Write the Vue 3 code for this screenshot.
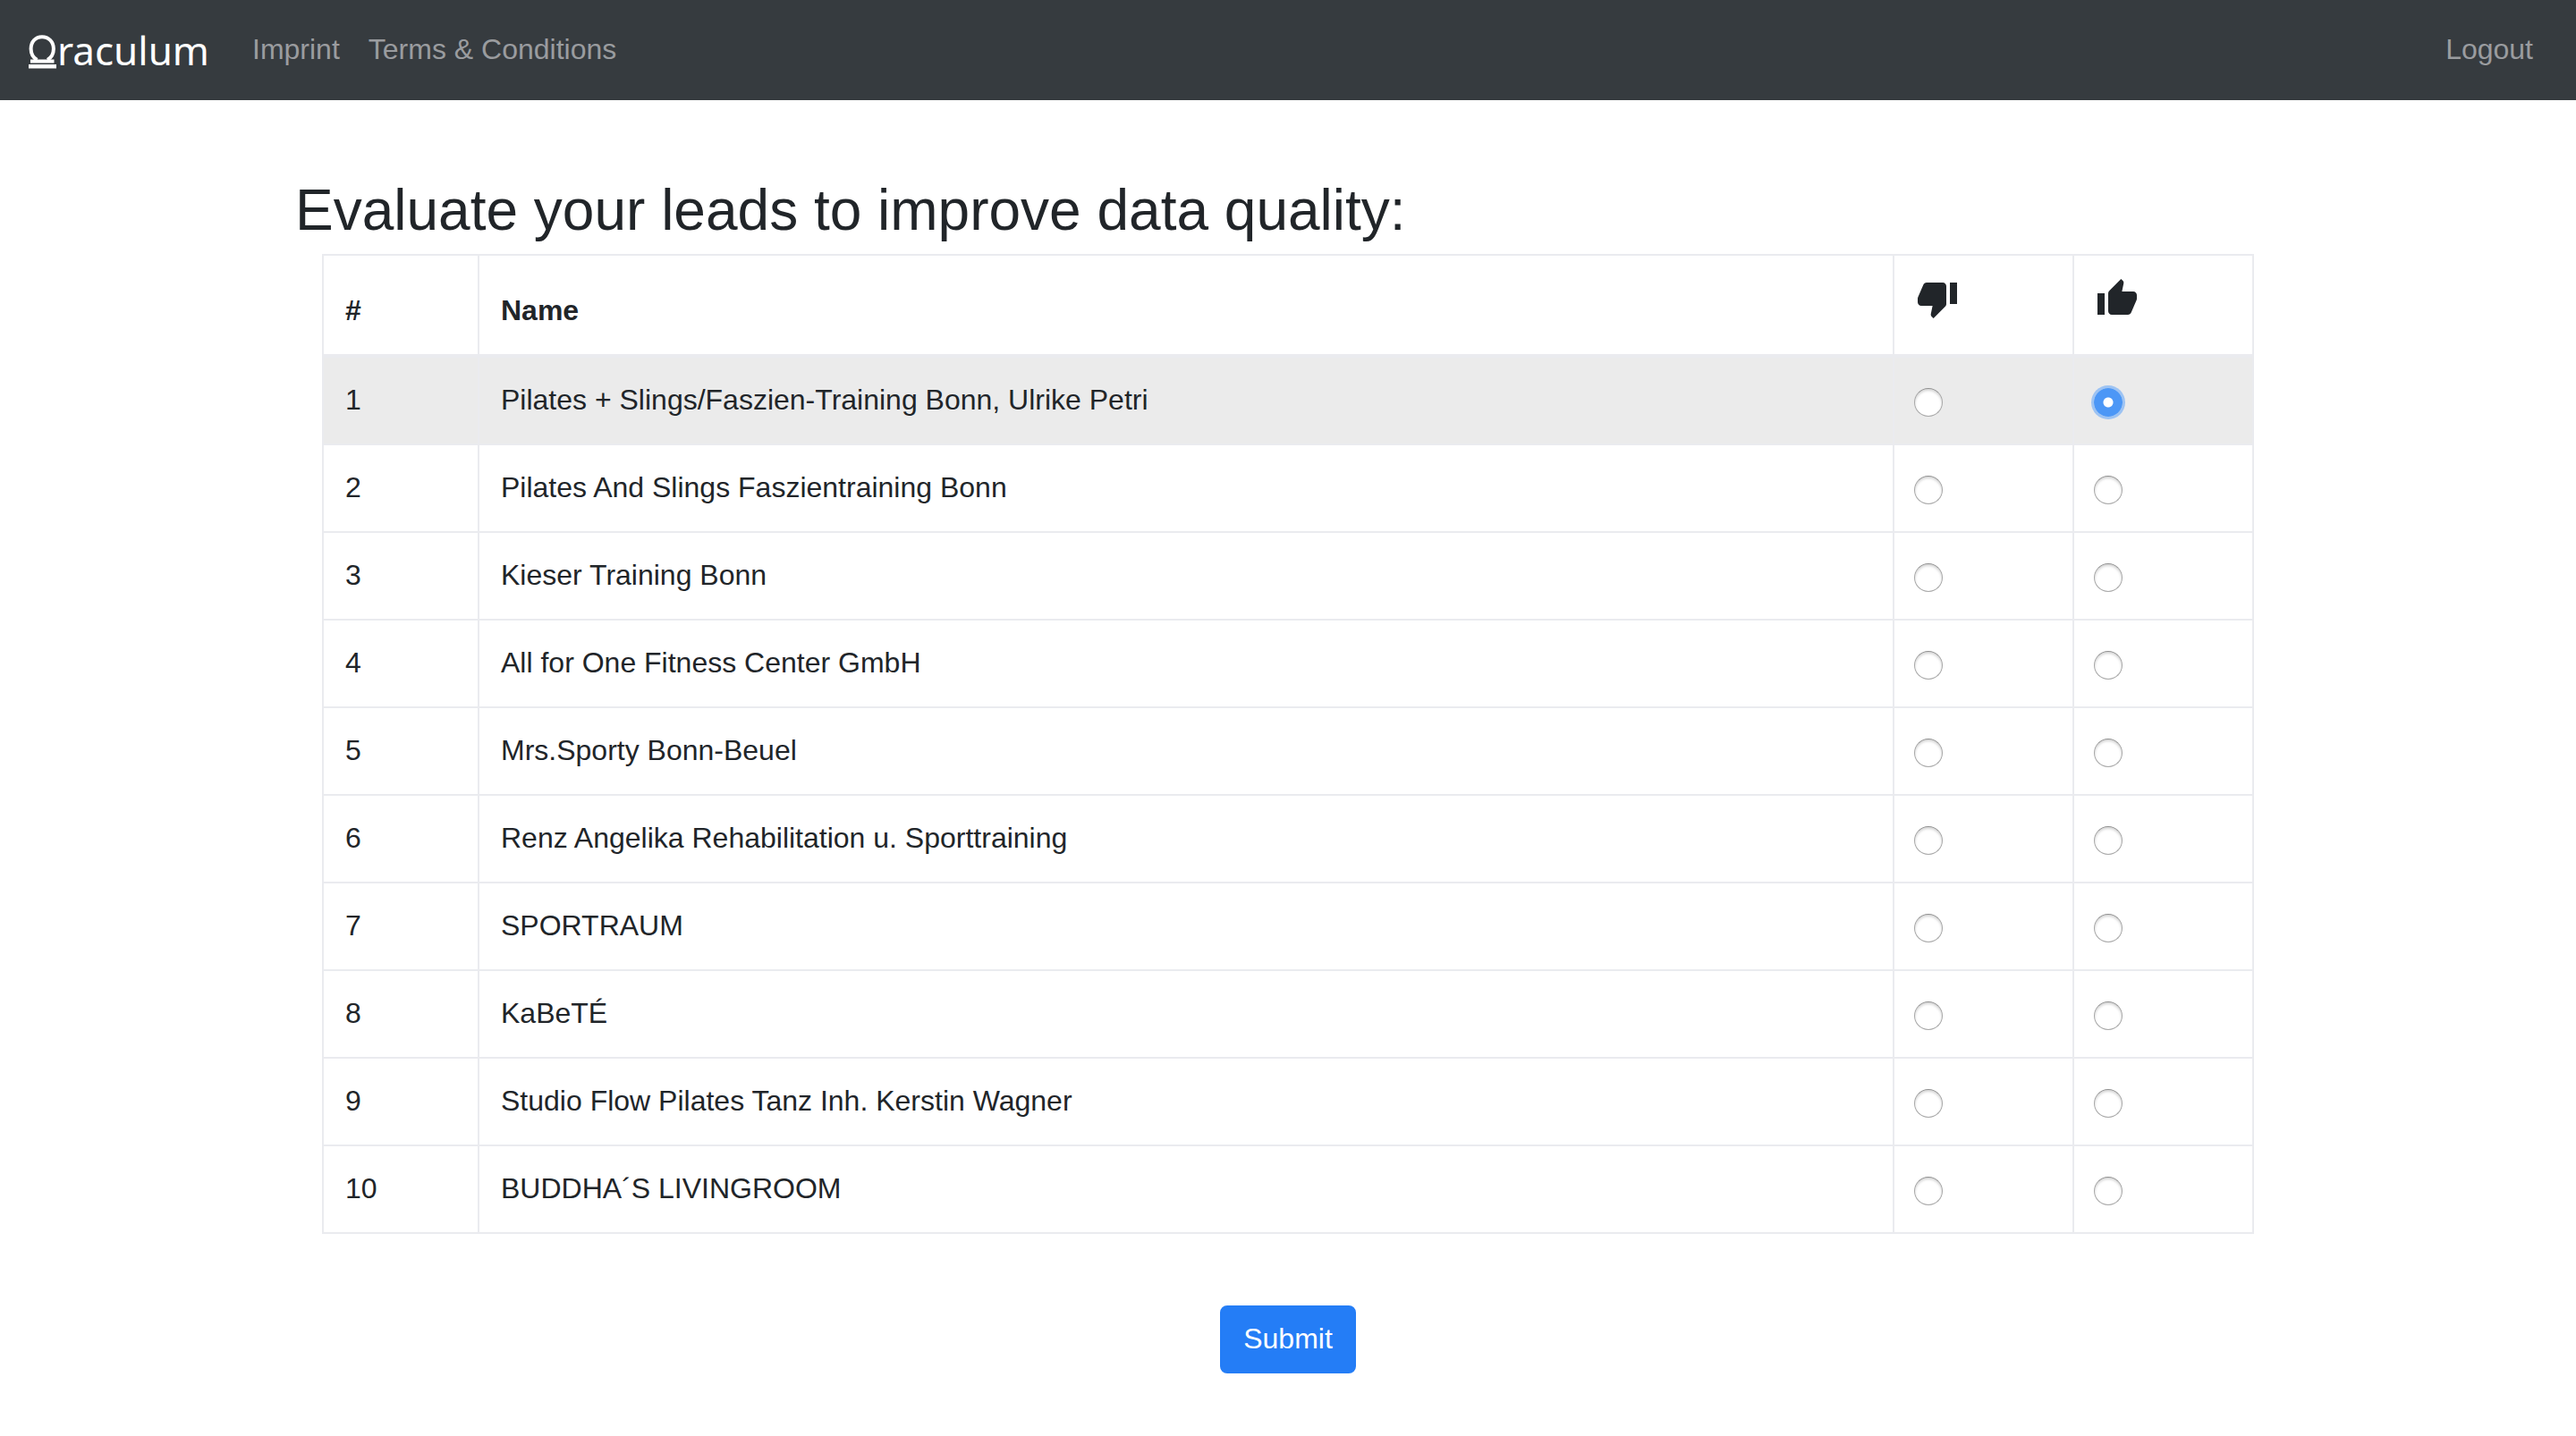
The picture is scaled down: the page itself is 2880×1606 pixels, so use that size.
<script setup>
import { ref } from 'vue'

const leads = ref([
  { id: 1, name: 'Pilates + Slings/Faszien-Training Bonn, Ulrike Petri', vote: 'up' },
  { id: 2, name: 'Pilates And Slings Faszientraining Bonn', vote: '' },
  { id: 3, name: 'Kieser Training Bonn', vote: '' },
  { id: 4, name: 'All for One Fitness Center GmbH', vote: '' },
  { id: 5, name: 'Mrs.Sporty Bonn-Beuel', vote: '' },
  { id: 6, name: 'Renz Angelika Rehabilitation u. Sporttraining', vote: '' },
  { id: 7, name: 'SPORTRAUM', vote: '' },
  { id: 8, name: 'KaBeTÉ', vote: '' },
  { id: 9, name: 'Studio Flow Pilates Tanz Inh. Kerstin Wagner', vote: '' },
  { id: 10, name: 'BUDDHA´S LIVINGROOM', vote: '' },
])
</script>

<template>
  <nav class="navbar">
    <a class="brand" href="#" aria-label="Oraculum">
      <svg class="brand-mark" viewBox="0 0 32 38" aria-hidden="true">
        <path d="M9.500 28C5 25.500 2.600 20.800 2.600 15.500C2.600 7.500 7.800 2.200 15 2.200S27.900 7.500 27.900 15.500C27.900 20.800 25.500 25.500 21 28" fill="none" stroke="#fff" stroke-width="4" />
        <path d="M2 27.500h26.500v4H2zM0 33h31v4.500H0z" fill="#fff" />
      </svg>
      <span class="brand-text">raculum</span>
    </a>
    <a class="nav-link" href="#">Imprint</a>
    <a class="nav-link" href="#">Terms &amp; Conditions</a>
    <a class="nav-link logout" href="#">Logout</a>
  </nav>

  <main class="container">
    <h2>Evaluate your leads to improve data quality:</h2>
    <form class="form" @submit.prevent>
      <table>
        <colgroup>
          <col class="col-id" />
          <col />
          <col class="col-vote" />
          <col class="col-vote" />
        </colgroup>
        <thead>
          <tr>
            <th scope="col">#</th>
            <th scope="col">Name</th>
            <th scope="col" aria-label="Bad lead">
              <svg class="thumb" viewBox="0 0 24 24" aria-hidden="true">
                <path d="M15 3H6c-.83 0-1.540.5-1.840 1.220l-3.020 7.050c-.09.23-.14.47-.14.73v2c0 1.100.9 2 2 2h6.310l-.95 4.570-.03.32c0 .41.17.79.44 1.060L9.830 23l6.590-6.590c.36-.36.58-.86.58-1.410V5c0-1.100-.9-2-2-2zm4 0v12h4V3h-4z" />
              </svg>
            </th>
            <th scope="col" aria-label="Good lead">
              <svg class="thumb" viewBox="0 0 24 24" aria-hidden="true">
                <path d="M1 21h4V9H1v12zm22-11c0-1.100-.9-2-2-2h-6.310l.95-4.570.03-.32c0-.41-.17-.79-.44-1.060L14.170 1 7.590 7.590C7.220 7.950 7 8.450 7 9v10c0 1.100.9 2 2 2h9c.83 0 1.540-.5 1.840-1.220l3.020-7.050c.09-.23.14-.47.14-.73v-2z" />
              </svg>
            </th>
          </tr>
        </thead>
        <tbody>
          <tr v-for="lead in leads" :key="lead.id" :class="{ active: lead.vote }">
            <td>{{ lead.id }}</td>
            <td>{{ lead.name }}</td>
            <td class="vote">
              <input v-model="lead.vote" type="radio" :name="'lead-' + lead.id" value="down" :aria-label="'Bad lead: ' + lead.name" />
            </td>
            <td class="vote">
              <input v-model="lead.vote" type="radio" :name="'lead-' + lead.id" value="up" :aria-label="'Good lead: ' + lead.name" />
            </td>
          </tr>
        </tbody>
      </table>
      <button class="submit" type="submit">Submit</button>
    </form>
  </main>
</template>

<style>
body {
  background: #fff;
  color: #212529;
  font: 32px/48px "Liberation Sans", Arial, sans-serif;
}
</style>

<style scoped>
*,
*::before {
  box-sizing: border-box;
}

.navbar {
  display: flex;
  align-items: center;
  height: 112px;
  padding: 0 32px;
  background: #363b3f;
}

.brand {
  display: flex;
  align-items: center;
  margin-right: 32px;
  color: #fff;
  text-decoration: none;
}

.brand-mark {
  width: 32px;
  height: 38px;
  margin-top: 4px;
}

.brand-text {
  font: 44px/56px "Noto Sans", sans-serif;
}

.nav-link {
  padding: 0 16px 2px;
  color: #9a9c9f;
  text-decoration: none;
}

.logout {
  margin-left: auto;
}

.container {
  max-width: 2280px;
  margin: 0 auto;
  padding: 88px 30px 64px;
}

h2 {
  margin: 0 0 14px;
  font-size: 64px;
  font-weight: 400;
  line-height: 70px;
}

.form {
  display: flex;
  flex-direction: column;
  align-items: center;
  gap: 80px;
  padding: 0 30px;
}

table {
  width: 100%;
  table-layout: fixed;
  border-collapse: collapse;
}

.col-id {
  width: 174px;
}

.col-vote {
  width: 201px;
}

th,
td {
  padding: 23px 24px 25px;
  border: 2px solid #eaebef;
  text-align: left;
  vertical-align: top;
}

th {
  border-bottom-width: 4px;
  vertical-align: bottom;
}

.thumb {
  display: block;
  width: 48px;
  height: 48px;
  margin: 1px 0 13px;
  fill: #212529;
}

.active {
  background: #ebebeb;
}

.vote {
  padding-left: 22px;
}

input {
  appearance: none;
  display: block;
  width: 32px;
  height: 32px;
  margin: 11px 0 5px;
  border: 1px solid #a8a8a8;
  border-top-color: #8f8f8f;
  border-radius: 50%;
  background: #fff;
  box-shadow: inset 0 2px 3px #d4d4d4;
}

input:checked {
  border: 0;
  background: radial-gradient(circle, #fff 5px, #4c97f6 6px);
  box-shadow: 0 0 0 3px #9dc3f3;
}

.submit {
  padding: 11px 24px 13px;
  border: 2px solid #247df6;
  border-radius: 8px;
  background: #247df6;
  color: #fff;
  font: inherit;
}
</style>
